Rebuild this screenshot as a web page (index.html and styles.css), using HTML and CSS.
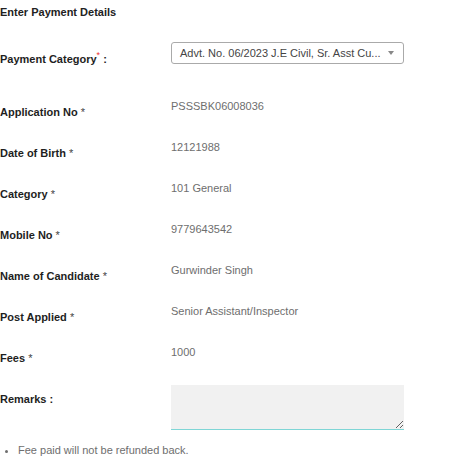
FILE: index.html
```html
<!DOCTYPE html>
<html>
<head>
<meta charset="utf-8">
<link rel="stylesheet" href="styles.css">
</head>
<body>
<div class="page">
  <div class="heading">Enter Payment Details</div>
  <div class="row row-select">
    <div class="label">Payment Category<sup class="req">*</sup> :</div>
    <div class="cell">
      <div class="select"><span class="select-text">Advt. No. 06/2023 J.E Civil, Sr. Asst Cu...</span><span class="arrow"></span></div>
    </div>
  </div>
  <div class="row">
    <div class="label">Application No <span class="star">*</span></div>
    <div class="value">PSSSBK06008036</div>
  </div>
  <div class="row">
    <div class="label">Date of Birth <span class="star">*</span></div>
    <div class="value">12121988</div>
  </div>
  <div class="row">
    <div class="label">Category <span class="star">*</span></div>
    <div class="value">101 General</div>
  </div>
  <div class="row">
    <div class="label">Mobile No <span class="star">*</span></div>
    <div class="value">9779643542</div>
  </div>
  <div class="row">
    <div class="label">Name of Candidate <span class="star">*</span></div>
    <div class="value">Gurwinder Singh</div>
  </div>
  <div class="row">
    <div class="label">Post Applied <span class="star">*</span></div>
    <div class="value">Senior Assistant/Inspector</div>
  </div>
  <div class="row">
    <div class="label">Fees <span class="star">*</span></div>
    <div class="value">1000</div>
  </div>
  <div class="row row-remarks">
    <div class="label">Remarks :</div>
    <div class="cell"><textarea class="remarks"></textarea></div>
  </div>
  <ul class="notes">
    <li>Fee paid will not be refunded back.</li>
  </ul>
</div>
</body>
</html>
```
FILE: styles.css
```css
html, body {
  margin: 0;
  padding: 0;
  background: #fff;
}
body {
  font-family: "Liberation Sans", Arial, sans-serif;
  font-size: 11px;
  line-height: 13px;
  color: #222;
}
.page {
  width: 460px;
}
.heading {
  height: 36px;
  box-sizing: border-box;
  padding-top: 6px;
  font-weight: bold;
  color: #222;
}
.row {
  display: grid;
  grid-template-columns: 171px 233px;
  height: 41px;
}
.row-select {
  height: 56px;
}
.label {
  font-weight: bold;
  color: #1e1e1e;
  padding-top: 14px;
  white-space: nowrap;
}
.row-select .label {
  padding-top: 17px;
}
.star {
  font-weight: normal;
  color: #444;
}
.req {
  color: #e33;
  font-weight: normal;
  font-size: 9px;
  line-height: 0;
  vertical-align: 5px;
}
.value {
  padding-top: 8px;
  color: #6e6e6e;
}
.cell {
  padding-top: 6px;
}
.row-remarks .cell {
  padding-top: 6px;
}
.select {
  height: 22px;
  box-sizing: border-box;
  border: 1px solid #aaa;
  border-radius: 3px;
  display: flex;
  align-items: center;
  justify-content: space-between;
  padding: 0 9px 0 8px;
  color: #444;
}
.select-text {
  white-space: nowrap;
}
.arrow {
  width: 0;
  height: 0;
  border-left: 3px solid transparent;
  border-right: 3px solid transparent;
  border-top: 4px solid #888;
}
.row-remarks {
  height: auto;
}
.remarks {
  display: block;
  width: 233px;
  height: 45px;
  box-sizing: border-box;
  margin: 0;
  border: 0 solid transparent;
  border-bottom: 1px solid #7fd6d6;
  outline: none;
  background: #f1f1f1;
  resize: both;
  font-family: "Liberation Sans", Arial, sans-serif;
}
.notes {
  margin: 14px 0 0 0;
  padding-left: 18px;
  color: #6e6e6e;
  list-style: disc;
}
```
